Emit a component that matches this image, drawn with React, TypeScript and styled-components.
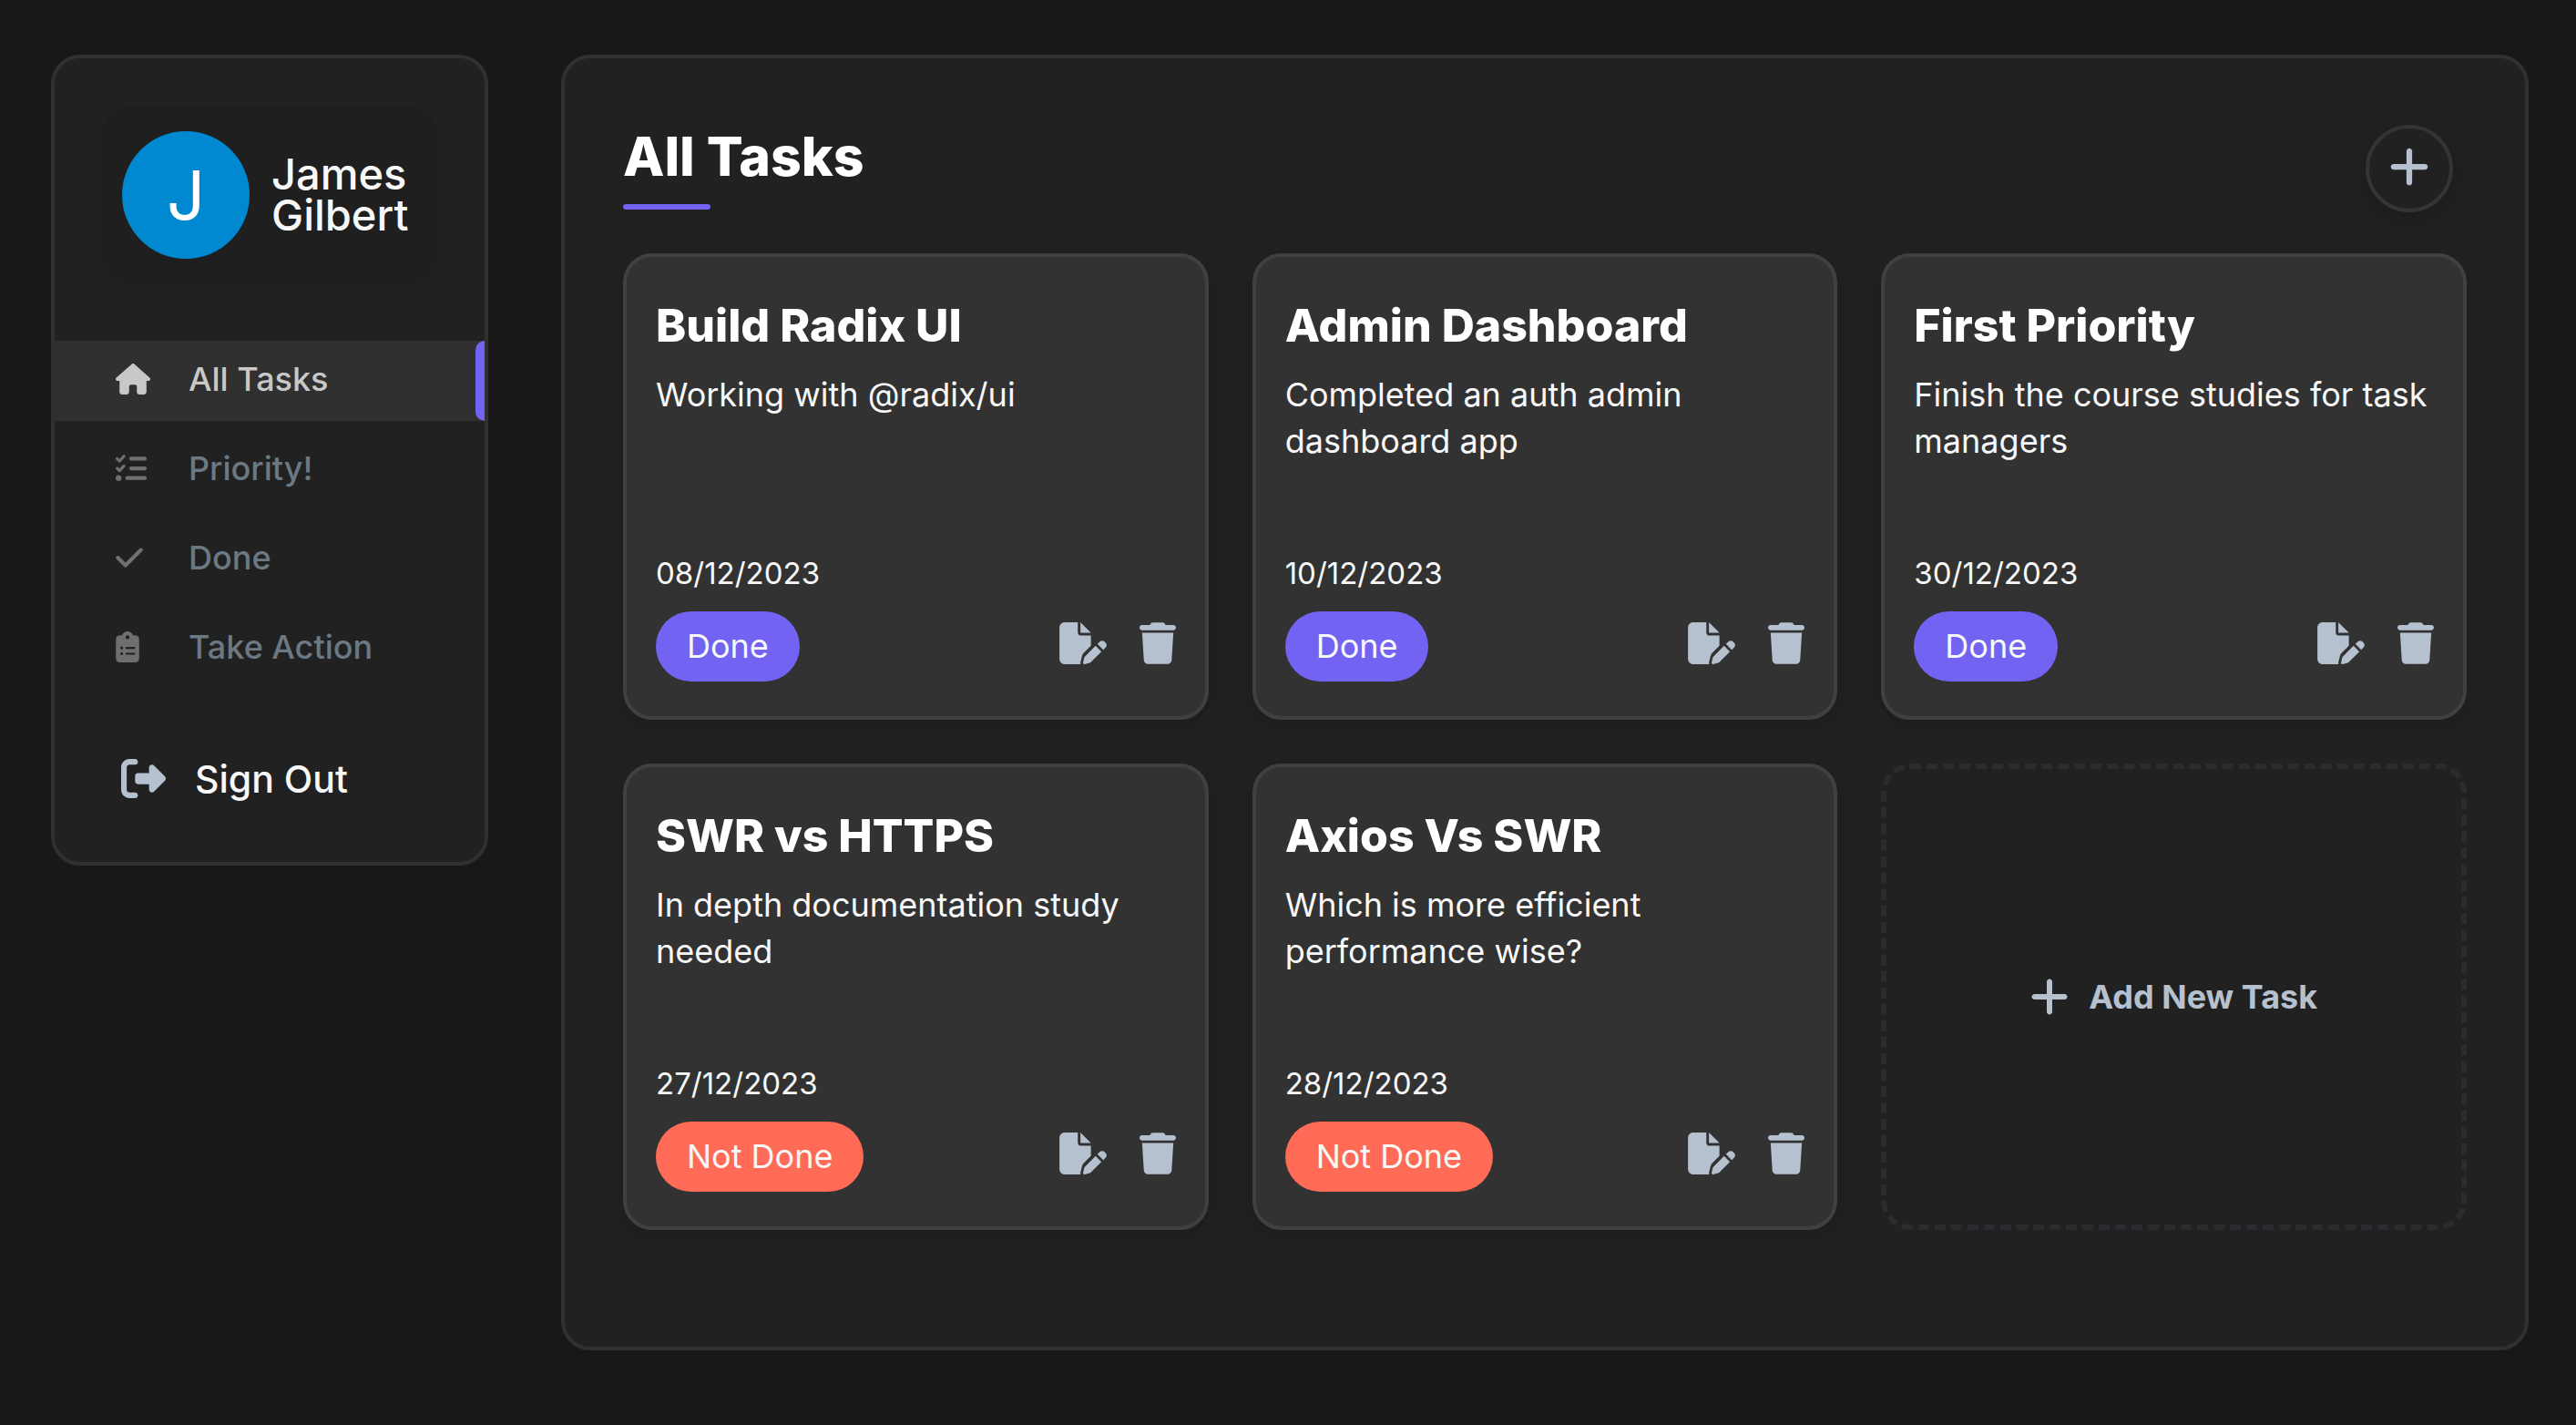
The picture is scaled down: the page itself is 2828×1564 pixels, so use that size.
import React from "react";
import styled, { createGlobalStyle } from "styled-components";
import {
  FaCheck,
  FaClipboardList,
  FaFilePen,
  FaHouse,
  FaListCheck,
  FaPlus,
  FaRightFromBracket,
  FaTrash,
} from "react-icons/fa6";

const color = {
  page: "#181818",
  panel: "#212121",
  line: "#303030",
  card: "#323232",
  cardLine: "#404040",
  primary: "#7263f3",
  danger: "#ff6b57",
  icon: "#b6c1d0",
  text: "#f8f8f8",
  muted: "#6c7983",
  mutedIcon: "#6f6f6f",
  active: "#c8c8c8",
};

const GlobalStyle = createGlobalStyle`
  * {
    box-sizing: border-box;
    margin: 0;
    padding: 0;
  }

  body {
    background: ${color.page};
    color: ${color.text};
    font-family: "Inter", "Liberation Sans", sans-serif;
    font-size: 36px;
    line-height: 51px;
  }

  button {
    border: none;
    background: none;
    color: inherit;
    font: inherit;
    cursor: pointer;
  }
`;

const Glyph = styled.span<{ $w: number; $h: number; $tone?: string }>`
  display: block;
  flex: none;
  color: ${(p) => p.$tone ?? "inherit"};

  svg {
    display: block;
    width: ${(p) => p.$w}px;
    height: ${(p) => p.$h}px;
  }
`;

const Page = styled.div`
  display: flex;
  gap: 80px;
  min-height: 100vh;
  padding: 60px 52px 82px 56px;
`;

const Sidebar = styled.aside`
  display: flex;
  flex-direction: column;
  align-self: flex-start;
  flex: none;
  width: 480px;
  padding: 52px 0 67px;
  border: 4px solid ${color.line};
  border-radius: 32px;
  background: ${color.panel};
`;

const Profile = styled.div`
  display: flex;
  align-items: center;
  gap: 24px;
  margin: 0 52px 62px;
  padding: 28px 22px;
  border-radius: 32px;
  background: #1f1f1f;
`;

const Avatar = styled.span`
  display: grid;
  place-items: center;
  flex: none;
  width: 140px;
  height: 140px;
  border-radius: 50%;
  background: #0089d1;
  color: #fff;
  font-size: 74px;
`;

const Name = styled.h1`
  padding-bottom: 2px;
  font-size: 47px;
  font-weight: 500;
  line-height: 45px;
`;

const NavList = styled.ul`
  display: flex;
  flex-direction: column;
  gap: 10px;
  list-style: none;
`;

const NavLink = styled.a<{ $active?: boolean }>`
  display: grid;
  grid-template-columns: 80px 1fr;
  align-items: center;
  height: 88px;
  padding: 0 0 4px 67px;
  position: relative;
  background: ${(p) => (p.$active ? color.line : "transparent")};
  color: ${(p) => (p.$active ? color.active : color.muted)};
  font-weight: 500;
  text-decoration: none;

  &::after {
    content: "";
    display: ${(p) => (p.$active ? "block" : "none")};
    position: absolute;
    top: 0;
    right: 0;
    width: 10px;
    height: 100%;
    border-radius: 10px 0 0 10px;
    background: ${color.primary};
  }
`;

const SignOut = styled.button`
  display: flex;
  align-items: center;
  gap: 32px;
  margin-top: 74px;
  padding-left: 73px;
  font-size: 41px;
  font-weight: 500;
  line-height: 48px;
`;

const Main = styled.main`
  flex: 1;
  min-width: 0;
  padding: 73px 64px 64px;
  border: 4px solid ${color.line};
  border-radius: 32px;
  background: ${color.panel};
`;

const Header = styled.header`
  display: flex;
  align-items: center;
  justify-content: space-between;
  margin-bottom: 45px;
  padding-right: 15px;
`;

const Heading = styled.h2`
  font-size: 59px;
  font-weight: 800;
  line-height: 64px;
  color: #fff;

  &::after {
    content: "";
    display: block;
    width: 96px;
    height: 6px;
    margin-top: 20px;
    border-radius: 3px;
    background: ${color.primary};
  }
`;

const RoundButton = styled.button`
  display: grid;
  place-items: center;
  width: 96px;
  height: 96px;
  padding-bottom: 4px;
  border: 4px solid #343434;
  border-radius: 50%;
  background: ${color.panel};
  color: ${color.icon};
  box-shadow: 0 6px 20px rgba(0, 0, 0, 0.2);
`;

const Grid = styled.div`
  display: grid;
  grid-template-columns: repeat(auto-fill, minmax(560px, 1fr));
  gap: 48px;
`;

const Card = styled.article`
  display: flex;
  flex-direction: column;
  min-height: 512px;
  padding: 45px 32px 38px;
  border: 4px solid ${color.cardLine};
  border-radius: 32px;
  background: ${color.card};
  box-shadow: 0 6px 20px rgba(0, 0, 0, 0.14);
`;

const CardTitle = styled.h3`
  margin-bottom: 21px;
  color: #fff;
  font-size: 50px;
  font-weight: 800;
  line-height: 60px;
`;

const CardDate = styled.time`
  margin-top: auto;
  margin-bottom: 16px;
  font-size: 33px;
`;

const CardFooter = styled.div`
  display: flex;
  align-items: center;
  justify-content: space-between;
`;

const Status = styled.button<{ $done: boolean }>`
  height: 77px;
  padding: 0 34px;
  border-radius: 39px;
  background: ${(p) => (p.$done ? color.primary : color.danger)};
`;

const Actions = styled.div`
  display: flex;
  gap: 36px;
  padding-bottom: 8px;
  color: ${color.icon};
`;

const AddCard = styled.button`
  display: flex;
  align-items: center;
  justify-content: center;
  gap: 22px;
  min-height: 512px;
  border: 6px dashed #2b2c30;
  border-radius: 32px;
  color: ${color.icon};
  font-weight: 700;
`;

const navItems = [
  { label: "All Tasks", Icon: FaHouse, width: 38, active: true },
  { label: "Priority!", Icon: FaListCheck, width: 34 },
  { label: "Done", Icon: FaCheck, width: 30 },
  { label: "Take Action", Icon: FaClipboardList, width: 26 },
];

const tasks = [
  { title: "Build Radix UI", text: "Working with @radix/ui", date: "08/12/2023", done: true },
  { title: "Admin Dashboard", text: "Completed an auth admin dashboard app", date: "10/12/2023", done: true },
  { title: "First Priority", text: "Finish the course studies for task managers", date: "30/12/2023", done: true },
  { title: "SWR vs HTTPS", text: "In depth documentation study needed", date: "27/12/2023", done: false },
  { title: "Axios Vs SWR", text: "Which is more efficient performance wise?", date: "28/12/2023", done: false },
];

export default function App() {
  return (
    <>
      <GlobalStyle />
      <Page>
        <Sidebar>
          <Profile>
            <Avatar aria-hidden="true">J</Avatar>
            <Name>
              James
              <br />
              Gilbert
            </Name>
          </Profile>
          <nav>
            <NavList>
              {navItems.map(({ label, Icon, width, active }) => (
                <li key={label}>
                  <NavLink href="#" $active={active} aria-current={active ? "page" : undefined}>
                    <Glyph $w={width} $h={34} $tone={active ? color.active : color.mutedIcon}>
                      <Icon />
                    </Glyph>
                    {label}
                  </NavLink>
                </li>
              ))}
            </NavList>
          </nav>
          <SignOut type="button">
            <Glyph $w={49} $h={49} $tone={color.icon}>
              <FaRightFromBracket />
            </Glyph>
            Sign Out
          </SignOut>
        </Sidebar>
        <Main>
          <Header>
            <Heading>All Tasks</Heading>
            <RoundButton type="button" aria-label="Add task">
              <Glyph $w={44} $h={50}>
                <FaPlus />
              </Glyph>
            </RoundButton>
          </Header>
          <Grid>
            {tasks.map((task) => (
              <Card key={task.title}>
                <CardTitle>{task.title}</CardTitle>
                <p>{task.text}</p>
                <CardDate>{task.date}</CardDate>
                <CardFooter>
                  <Status type="button" $done={task.done}>
                    {task.done ? "Done" : "Not Done"}
                  </Status>
                  <Actions>
                    <button type="button" aria-label="Edit">
                      <Glyph $w={52} $h={46}>
                        <FaFilePen />
                      </Glyph>
                    </button>
                    <button type="button" aria-label="Delete">
                      <Glyph $w={40} $h={46}>
                        <FaTrash />
                      </Glyph>
                    </button>
                  </Actions>
                </CardFooter>
              </Card>
            ))}
            <AddCard type="button">
              <Glyph $w={42} $h={48}>
                <FaPlus />
              </Glyph>
              Add New Task
            </AddCard>
          </Grid>
        </Main>
      </Page>
    </>
  );
}
